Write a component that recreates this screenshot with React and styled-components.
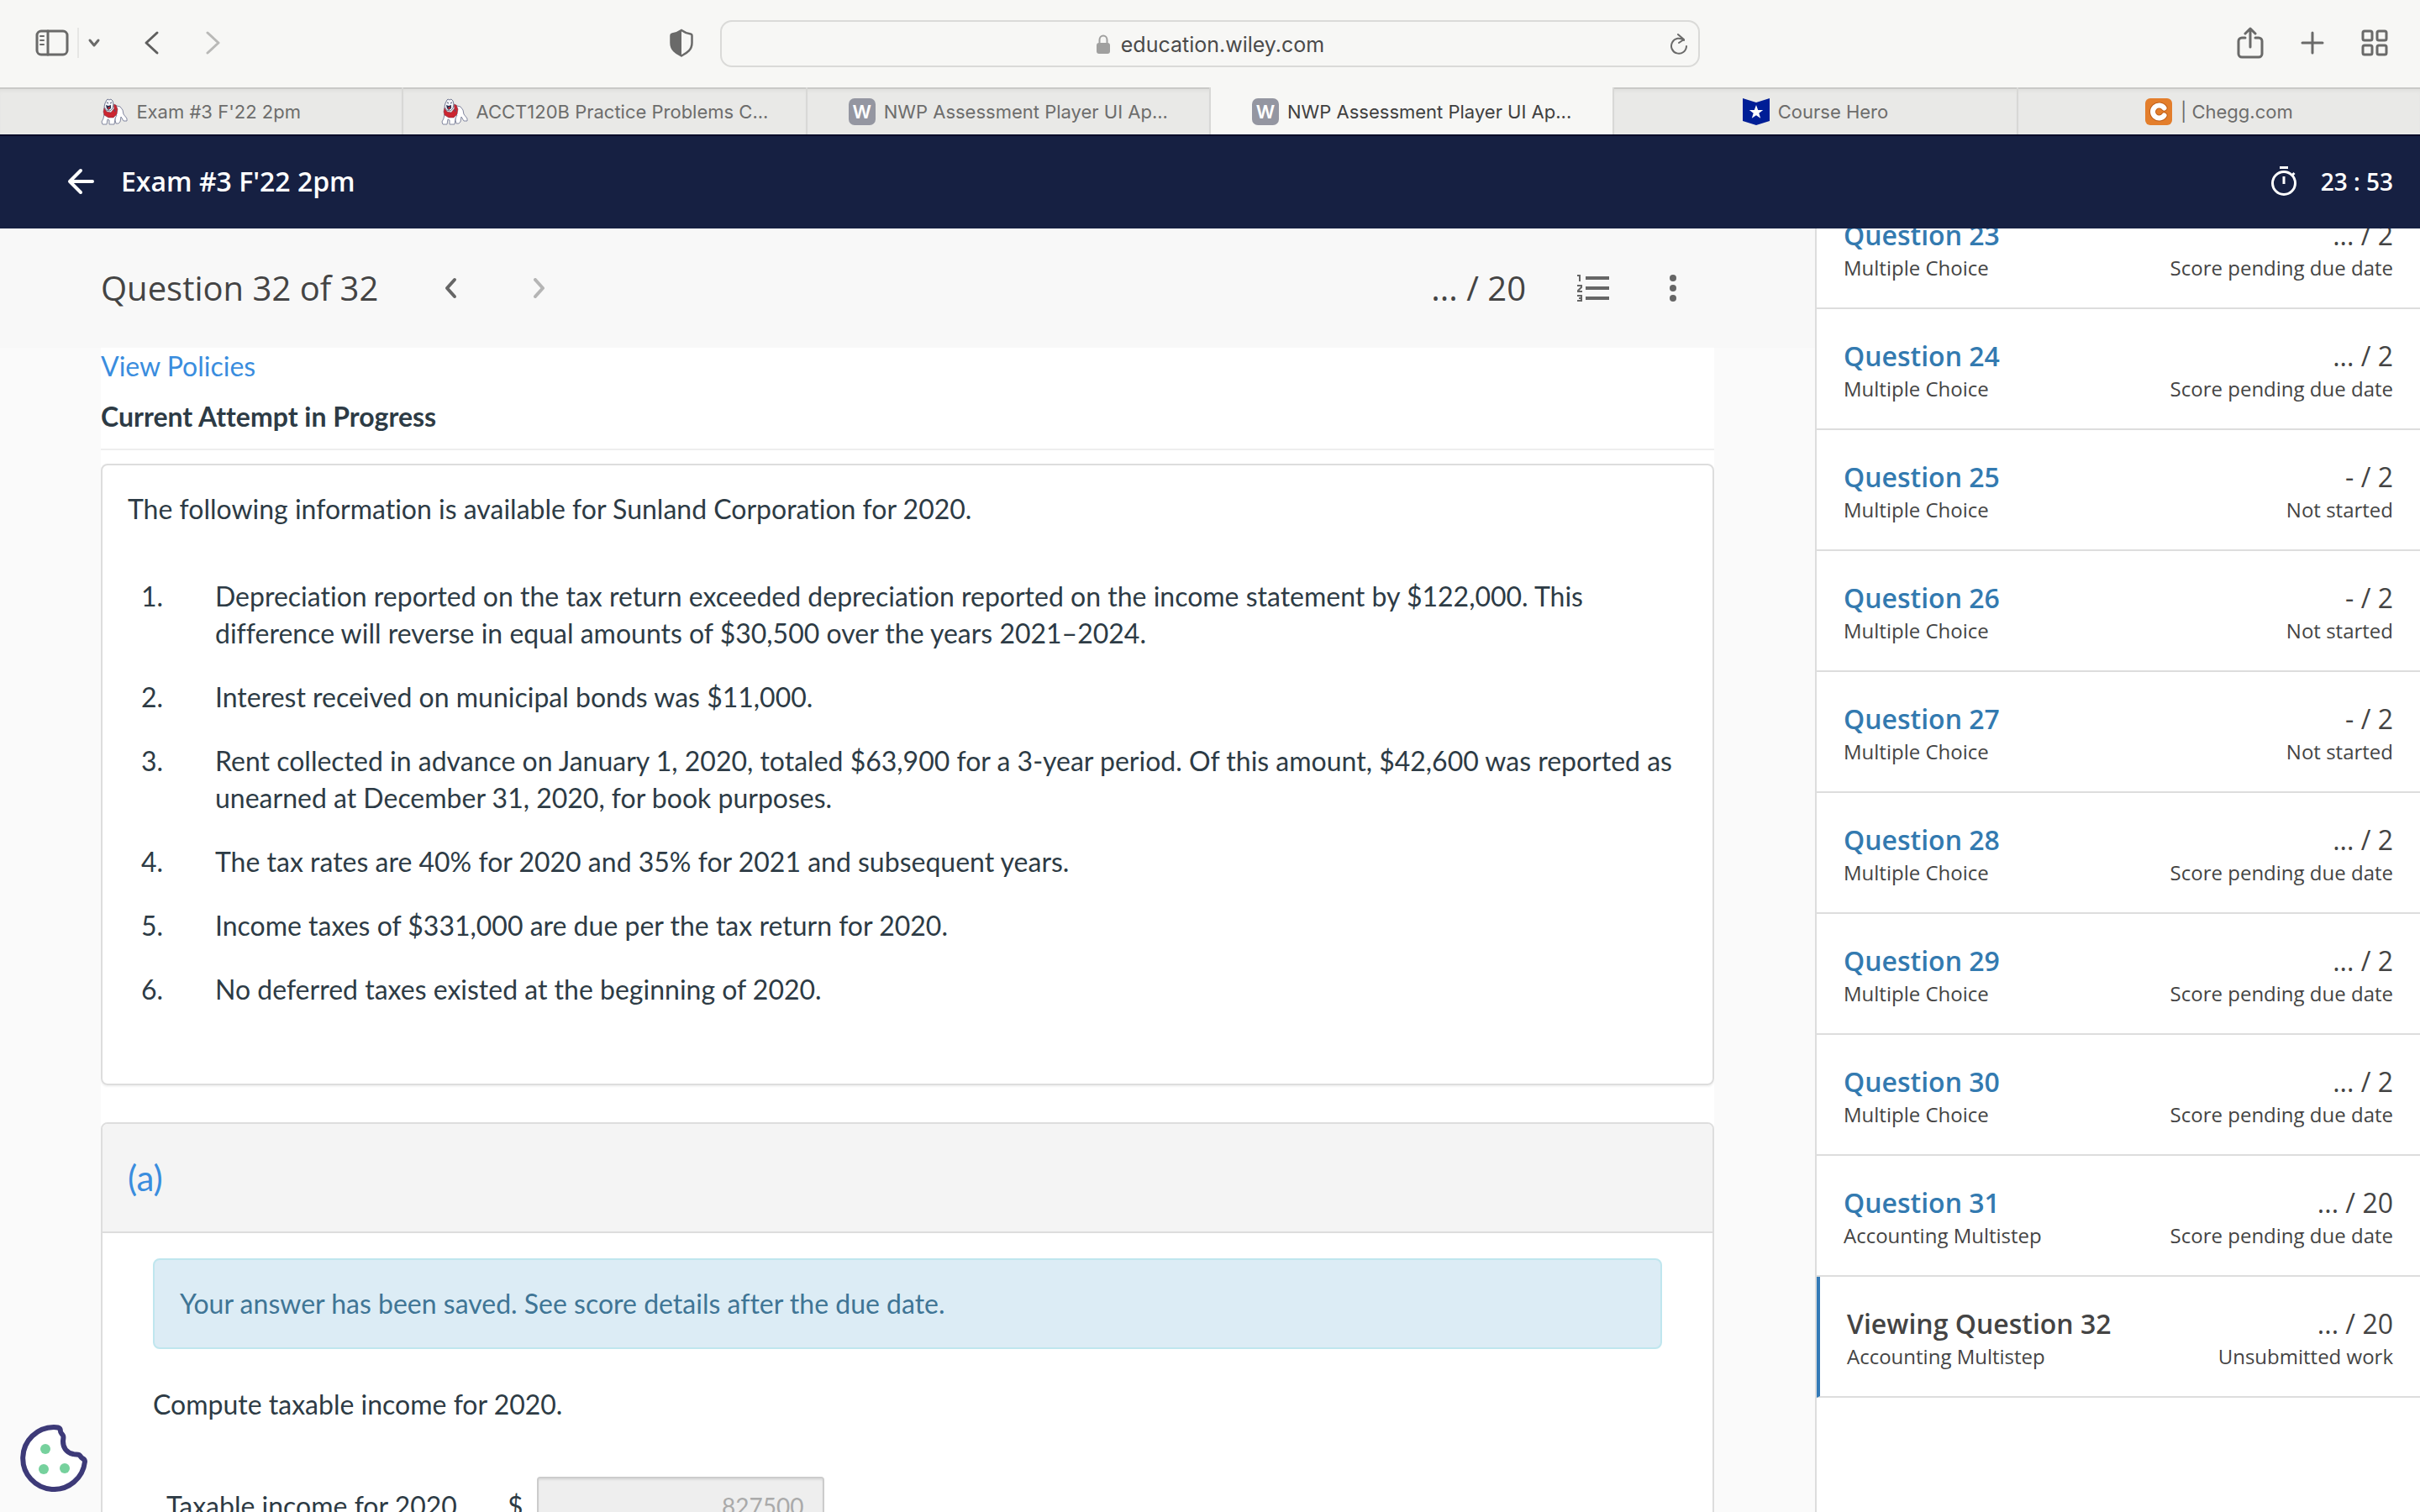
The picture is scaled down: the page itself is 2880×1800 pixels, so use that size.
import React from "react"
import styled, { createGlobalStyle } from "styled-components"

const GlobalStyle = createGlobalStyle`
  *, *::before, *::after {
    box-sizing: border-box;
  }
  body {
    margin: 0;
    background: #fafafa;
    color: #444;
    font-family: "Open Sans", "Noto Sans", sans-serif;
  }
  button {
    display: flex;
    align-items: center;
    justify-content: center;
    padding: 0;
    border: none;
    background: none;
    color: inherit;
    font: inherit;
    cursor: pointer;
  }
  a {
    text-decoration: none;
  }
  svg {
    display: block;
    flex: none;
  }
  h1, h2, h3, p, ul, ol {
    margin: 0;
    padding: 0;
  }
`

const Page = styled.div`
  display: flex;
  flex-direction: column;
  height: 100vh;
  overflow: hidden;
`

/* browser chrome */
const Toolbar = styled.div`
  display: grid;
  grid-template-columns: 1fr minmax(0, 1166px) 1fr;
  align-items: center;
  height: 104px;
  flex: none;
  background: #f7f7f5;
  color: #6a6a69;
`

const ToolbarLeft = styled.div`
  display: flex;
  align-items: center;
  padding: 0 32px 2px 42px;
`

const SidebarToggle = styled.div`
  display: flex;
  align-items: center;
  gap: 10px;
  margin-right: 50px;
`

const Divider = styled.span`
  width: 2px;
  height: 36px;
  background: #e6e6e4;
`

const NavButton = styled.button`
  width: 20px;
  margin-right: 54px;
  color: ${(p) => (p.$muted ? "#b9b9b7" : "#5f5f5e")};
`

const ShieldButton = styled.button`
  margin-left: auto;
`

const AddressBar = styled.div`
  display: flex;
  align-items: center;
  height: 56px;
  padding: 0 12px 0 34px;
  border: 2px solid #dadad8;
  border-radius: 14px;
`

const Address = styled.div`
  display: flex;
  flex: 1;
  align-items: center;
  justify-content: center;
  gap: 12px;
  padding-top: 2px;
  color: #4a4a4a;
  font-family: Inter, Roboto, sans-serif;
  font-size: 25px;
`

const ToolbarRight = styled.div`
  display: flex;
  align-items: center;
  justify-content: flex-end;
  gap: 44px;
  padding: 0 38px 2px 0;
`

const Tabs = styled.nav`
  display: flex;
  flex: none;
  height: 56px;
`

const Tab = styled.a`
  display: flex;
  flex: 1;
  align-items: center;
  justify-content: center;
  gap: 10px;
  min-width: 0;
  padding-top: 2px;
  border-left: 2px solid #d8d8d6;
  background: ${(p) => (p.$active ? "#f7f7f5" : "#e9e9e7")};
  box-shadow: ${(p) => (p.$active ? "none" : "inset 0 2px 0 #c9c9c7, inset 0 6px 4px -2px #dededc")};
  color: ${(p) => (p.$active ? "#404040" : "#6d6d6c")};
  font-family: Inter, Roboto, sans-serif;
  font-size: 22px;
  white-space: nowrap;

  &:first-child {
    border-left: none;
  }
`

const LetterIcon = styled.span`
  display: flex;
  align-items: center;
  justify-content: center;
  width: 32px;
  height: 32px;
  border-radius: 7px;
  background: #9496a1;
  color: #fff;
  font-weight: 600;
`

/* exam header */
const Header = styled.header`
  display: flex;
  flex: none;
  align-items: center;
  gap: 32px;
  height: 112px;
  padding: 0 32px 2px 80px;
  border-top: 2px solid #040b28;
  background: #162042;
  color: #fff;
`

const HeaderTitle = styled.h1`
  flex: 1;
  font-size: 32px;
  font-weight: 600;
  line-height: 44px;
`

const Timer = styled.div`
  display: flex;
  align-items: center;
  gap: 28px;
  font-size: 28px;
  font-weight: 600;
`

const Body = styled.div`
  display: grid;
  grid-template-columns: 3fr 1fr;
  flex: 1;
  min-height: 0;
`

const Main = styled.main`
  display: flex;
  flex-direction: column;
  min-width: 0;
  overflow: hidden;
`

const QuestionBar = styled.div`
  display: flex;
  flex: none;
  align-items: center;
  height: 142px;
  padding: 0 164px 0 120px;
  background: #f8f8f8;
  color: #666;
`

const BarText = styled.h2`
  color: #444;
  font-size: 40px;
  font-weight: 400;
  line-height: 56px;
`

const Pager = styled.div`
  display: flex;
  flex: 1;
  gap: 90px;
  padding-left: 78px;
`

const PagerButton = styled.button`
  width: 16px;
  opacity: ${(p) => (p.disabled ? 0.45 : 1)};
`

const BarActions = styled.div`
  display: flex;
  gap: 70px;
  padding-left: 60px;
`

const Content = styled.div`
  flex: 1;
  min-height: 0;
  margin: 0 120px;
  overflow: hidden;
  background: #fff;
  color: #2d3b45;
  font-family: Lato, "Open Sans", sans-serif;
  font-size: 32px;
  font-variant-ligatures: none;
  line-height: 44px;
  text-rendering: optimizeLegibility;
`

const PolicyLink = styled.a`
  display: block;
  color: #3a8dde;
`

const Attempt = styled.h3`
  margin-bottom: 16px;
  padding: 16px 0;
  border-bottom: 2px solid #eee;
  font-size: 32px;
  font-weight: 700;
  line-height: 44px;
`

const Card = styled.section`
  margin-bottom: 44px;
  border: 2px solid #ddd;
  border-radius: 8px;
  box-shadow: 0 2px 2px rgba(0, 0, 0, 0.05);
`

const Info = styled.div`
  padding: 30px 30px 90px;
`

const Facts = styled.ol`
  display: flex;
  flex-direction: column;
  gap: 32px;
  margin-top: 60px;
  padding: 0 16px;
  list-style: none;
`

const Fact = styled.li`
  display: grid;
  grid-template-columns: 88px 1fr;
`

const PartTitle = styled.h3`
  padding: 40px 30px;
  border-bottom: 2px solid #ddd;
  border-radius: 6px 6px 0 0;
  background: #f4f4f4;
  color: #3a8dde;
  font-size: 42px;
  font-weight: 400;
  line-height: 48px;
`

const PartBody = styled.div`
  padding: 30px 60px;
`

const Alert = styled.div`
  margin-bottom: 44px;
  padding: 30px;
  border: 2px solid #bfe6ee;
  border-radius: 8px;
  background: #dcecf5;
  color: #3f7595;
`

const AnswerRow = styled.div`
  display: flex;
  align-items: center;
  margin-top: 64px;
  padding-left: 16px;
`

const AnswerLabel = styled.label`
  width: 406px;
`

const Amount = styled.input`
  width: 342px;
  height: 70px;
  margin-left: 16px;
  padding: 0 22px;
  border: 2px solid #ccc;
  border-radius: 4px;
  background: #eee;
  box-shadow: inset 0 2px 2px rgba(0, 0, 0, 0.08);
  color: #aaa;
  font-family: Lato, sans-serif;
  font-size: 28px;
  text-align: right;
`

/* question list */
const Sidebar = styled.aside`
  min-height: 0;
  overflow: hidden;
  border-left: 2px solid #ddd;
  background: #fff;
`

const QuestionList = styled.ul`
  margin-top: -48px;
  list-style: none;
`

const QuestionItem = styled.li`
  display: grid;
  grid-template-columns: auto auto;
  align-content: center;
  justify-content: space-between;
  height: 144px;
  padding: 4px 32px 0;
  border-bottom: 2px solid #ddd;
  border-left: ${(p) => (p.$active ? "4px solid #337ab7" : "none")};
`

const QuestionLink = styled.a`
  color: ${(p) => (p.$active ? "#444" : "#337ab0")};
  font-size: 32px;
  font-weight: 600;
  line-height: 44px;
`

const Score = styled.span`
  font-size: 32px;
  line-height: 44px;
  text-align: right;
`

const Note = styled.span`
  font-size: 24px;
  line-height: 34px;
  text-align: ${(p) => (p.$end ? "right" : "left")};
`

const CookieButton = styled.button`
  position: fixed;
  bottom: 24px;
  left: 24px;
`

const Stroke = ({ w, h, width = 3, children }) => (
  <svg
    width={w}
    height={h}
    viewBox={`0 0 ${w} ${h}`}
    fill="none"
    stroke="currentColor"
    strokeWidth={width}
    strokeLinecap="round"
    strokeLinejoin="round"
  >
    {children}
  </svg>
)

const PanelIcon = () => (
  <Stroke w={40} h={32}>
    <rect x="2" y="2" width="36" height="28" rx="5" />
    <path d="M15 2v28" />
    <path d="M6 8h4M6 13h4M6 18h4" strokeWidth="2" />
  </Stroke>
)

const ShieldIcon = () => (
  <svg width="28" height="34" viewBox="0 0 28 34">
    <path
      d="M14 2C10 5 6 6 3 6.500c-1 .2-1.500.7-1.500 1.700V17c0 8 5.500 12 12.500 15.500C21 29 26.500 25 26.500 17V8.200c0-1-.5-1.500-1.500-1.700C22 6 18 5 14 2z"
      fill="none"
      stroke="#6a6a69"
      strokeWidth="2.500"
    />
    <path d="M14 2C10 5 6 6 3 6.500c-1 .2-1.500.7-1.500 1.700V17c0 8 5.500 12 12.500 15.500z" fill="#6a6a69" />
  </svg>
)

const LockIcon = () => (
  <svg width="18" height="24" viewBox="0 0 18 24">
    <rect x="1" y="10" width="16" height="13" rx="3" fill="#a0a09f" />
    <path d="M4.500 11V6.500a4.500 5 0 0 1 9 0V11" fill="none" stroke="#a0a09f" strokeWidth="2" />
  </svg>
)

const BulldogIcon = () => (
  <svg width="32" height="32" viewBox="0 0 32 32" strokeLinejoin="round">
    <path
      d="M19 9l4 1 3 4 1 5 4 5v3h-4l-3-5-1 6-2 2h-3l-1-4 1-17z"
      fill="#fff"
      stroke="#8388a0"
    />
    <path
      d="M4 19l-1 5-2 4 1 3h5l1-6 2 1v5h6l1-7 2-4z"
      fill="#fff"
      stroke="#8388a0"
    />
    <path d="M4 11l-1 5 1 4 5 3h6l4-4 1-6-2-5-3-1 1 5-4 5-5-1z" fill="#cb2530" stroke="#6d3046" strokeWidth="0.500" />
    <path
      d="M7 2l1-1 2 1 2-1 2 2 1 4-1 5-3 3-5-1-2-4 1-4z"
      fill="#f3f4f7"
      stroke="#767c95"
    />
    <path d="M6 8l3 1 3-1v4l-3 2-2-2z" fill="#27304f" />
    <path d="M8 11l3-1v2l-2 1z" fill="#cb2530" />
    <path d="M7 5l2 1M11 6l2-1M16 13l1 3" fill="none" stroke="#4b526f" />
  </svg>
)

const HeroIcon = () => (
  <svg width="32" height="32" viewBox="0 0 32 32">
    <path d="M0 0l16 5 16-5v27l-16 5-16-5z" fill="#001e96" />
    <path d="M16 8l2.200 6h6l-4.900 3.700 1.900 6.100L16 20.200l-5.200 3.600 1.900-6.100L7.800 14h6z" fill="#fff" />
  </svg>
)

const CheggIcon = () => (
  <svg width="32" height="32" viewBox="0 0 32 32">
    <rect width="32" height="32" rx="6" fill="#e37e2c" />
    <path d="M22.500 11.500a7.500 7.500 0 1 0 0 9" fill="none" stroke="#c05f19" strokeWidth="8" strokeLinecap="round" />
    <path d="M22.500 11.500a7.500 7.500 0 1 0 0 9" fill="none" stroke="#fff" strokeWidth="6" strokeLinecap="round" />
  </svg>
)

const TimerIcon = () => (
  <svg width="32" height="36" viewBox="0 0 32 36" fill="none" stroke="#fff" strokeWidth="3">
    <circle cx="16" cy="20" r="13.500" />
    <path d="M11 1.500h10M16 12v9M25.500 11l3-3" />
  </svg>
)

const NumberedListIcon = () => (
  <svg width="40" height="34" viewBox="0 0 40 34" fill="none" stroke="#666" strokeWidth="2">
    <path d="M11 5h28M11 17h28M11 29h28" strokeWidth="4" />
    <path d="M1 2h3v7M1 14h5v2l-4 4v1h5M1 26h5v6H1M3 29h3" />
  </svg>
)

const DotsIcon = () => (
  <svg width="10" height="34" viewBox="0 0 10 34" fill="#666">
    <circle cx="5" cy="5" r="4" />
    <circle cx="5" cy="17" r="4" />
    <circle cx="5" cy="29" r="4" />
  </svg>
)

const CookieIcon = () => (
  <svg width="80" height="80" viewBox="0 0 80 80">
    <path
      d="M45 3.500C43 3 41 3 40 3a37 37 0 1 0 37 41c0-2-1-3-3-4-2-1-2-3-4-4-2-1-4 0-7-1-9-2-12-9-12-15 0-3 1-5 0-7-1-2-3-3-3-5 0-2-1-4-3-4.500z"
      fill="#fff"
      stroke="#3d3a78"
      strokeWidth="6"
      strokeLinejoin="round"
    />
    <circle cx="30" cy="29" r="6" fill="#76d19d" />
    <circle cx="28" cy="53" r="6" fill="#76d19d" />
    <circle cx="53" cy="52" r="6" fill="#76d19d" />
  </svg>
)

const tabs = [
  { title: "Exam #3 F'22 2pm", icon: <BulldogIcon /> },
  { title: "ACCT120B Practice Problems C...", icon: <BulldogIcon /> },
  { title: "NWP Assessment Player UI Ap...", icon: <LetterIcon>W</LetterIcon> },
  { title: "NWP Assessment Player UI Ap...", icon: <LetterIcon>W</LetterIcon>, active: true },
  { title: "Course Hero", icon: <HeroIcon /> },
  { title: "| Chegg.com", icon: <CheggIcon /> },
]

const facts = [
  "Depreciation reported on the tax return exceeded depreciation reported on the income statement by $122,000. This difference will reverse in equal amounts of $30,500 over the years 2021–2024.",
  "Interest received on municipal bonds was $11,000.",
  "Rent collected in advance on January 1, 2020, totaled $63,900 for a 3-year period. Of this amount, $42,600 was reported as unearned at December 31, 2020, for book purposes.",
  "The tax rates are 40% for 2020 and 35% for 2021 and subsequent years.",
  "Income taxes of $331,000 are due per the tax return for 2020.",
  "No deferred taxes existed at the beginning of 2020.",
]

const questions = [
  { title: "Question 23", type: "Multiple Choice", score: "... / 2", status: "Score pending due date" },
  { title: "Question 24", type: "Multiple Choice", score: "... / 2", status: "Score pending due date" },
  { title: "Question 25", type: "Multiple Choice", score: "- / 2", status: "Not started" },
  { title: "Question 26", type: "Multiple Choice", score: "- / 2", status: "Not started" },
  { title: "Question 27", type: "Multiple Choice", score: "- / 2", status: "Not started" },
  { title: "Question 28", type: "Multiple Choice", score: "... / 2", status: "Score pending due date" },
  { title: "Question 29", type: "Multiple Choice", score: "... / 2", status: "Score pending due date" },
  { title: "Question 30", type: "Multiple Choice", score: "... / 2", status: "Score pending due date" },
  { title: "Question 31", type: "Accounting Multistep", score: "... / 20", status: "Score pending due date" },
  {
    title: "Viewing Question 32",
    type: "Accounting Multistep",
    score: "... / 20",
    status: "Unsubmitted work",
    active: true,
  },
]

const App = () => {
  return (
    <Page>
      <GlobalStyle />
      <Toolbar>
        <ToolbarLeft>
          <SidebarToggle>
            <button aria-label="Show sidebar">
              <PanelIcon />
            </button>
            <Divider />
            <button aria-label="Sidebar menu">
              <Stroke w={16} h={12}>
                <path d="M3 3l5 6 5-6" />
              </Stroke>
            </button>
          </SidebarToggle>
          <NavButton aria-label="Back">
            <Stroke w={20} h={30}>
              <path d="M17 3L4 15l13 12" />
            </Stroke>
          </NavButton>
          <NavButton aria-label="Forward" $muted>
            <Stroke w={20} h={30}>
              <path d="M3 3l13 12L3 27" />
            </Stroke>
          </NavButton>
          <ShieldButton aria-label="Privacy report">
            <ShieldIcon />
          </ShieldButton>
        </ToolbarLeft>
        <AddressBar>
          <Address>
            <LockIcon />
            education.wiley.com
          </Address>
          <button aria-label="Reload">
            <Stroke w={22} h={26} width={2}>
              <path d="M17 9a9 9 0 1 0 3 7M10 2l7 6-6 4" />
            </Stroke>
          </button>
        </AddressBar>
        <ToolbarRight>
          <button aria-label="Share">
            <Stroke w={32} h={38}>
              <path d="M10 13H6a4 4 0 0 0-4 4v15a4 4 0 0 0 4 4h20a4 4 0 0 0 4-4V17a4 4 0 0 0-4-4h-4M16 24V2M10 8l6-6 6 6" />
            </Stroke>
          </button>
          <button aria-label="New tab">
            <Stroke w={28} h={28}>
              <path d="M14 2v24M2 14h24" />
            </Stroke>
          </button>
          <button aria-label="Tab overview">
            <Stroke w={32} h={32}>
              <rect x="2" y="2" width="11" height="11" rx="2" />
              <rect x="19" y="2" width="11" height="11" rx="2" />
              <rect x="2" y="19" width="11" height="11" rx="2" />
              <rect x="19" y="19" width="11" height="11" rx="2" />
            </Stroke>
          </button>
        </ToolbarRight>
      </Toolbar>
      <Tabs>
        {tabs.map((tab, i) => (
          <Tab href="#" key={i} $active={tab.active}>
            {tab.icon}
            {tab.title}
          </Tab>
        ))}
      </Tabs>
      <Header>
        <button aria-label="Back to course">
          <Stroke w={32} h={32} width={4}>
            <path d="M30 16H3M16 3L3 16l13 13" />
          </Stroke>
        </button>
        <HeaderTitle>Exam #3 F'22 2pm</HeaderTitle>
        <Timer>
          <TimerIcon />
          23 : 53
        </Timer>
      </Header>
      <Body>
        <Main>
          <QuestionBar>
            <BarText>Question 32 of 32</BarText>
            <Pager>
              <PagerButton aria-label="Previous question">
                <Stroke w={16} h={26} width={4}>
                  <path d="M13 3L4 13l9 10" />
                </Stroke>
              </PagerButton>
              <PagerButton aria-label="Next question" disabled>
                <Stroke w={16} h={26} width={4}>
                  <path d="M3 3l9 10-9 10" />
                </Stroke>
              </PagerButton>
            </Pager>
            <BarText as="span">... / 20</BarText>
            <BarActions>
              <button aria-label="Question list">
                <NumberedListIcon />
              </button>
              <button aria-label="More options">
                <DotsIcon />
              </button>
            </BarActions>
          </QuestionBar>
          <Content>
            <PolicyLink href="#">View Policies</PolicyLink>
            <Attempt>Current Attempt in Progress</Attempt>
            <Card>
              <Info>
                <p>The following information is available for Sunland Corporation for 2020.</p>
                <Facts>
                  {facts.map((fact, i) => (
                    <Fact key={i}>
                      <span>{i + 1}.</span>
                      <span>{fact}</span>
                    </Fact>
                  ))}
                </Facts>
              </Info>
            </Card>
            <Card>
              <PartTitle>(a)</PartTitle>
              <PartBody>
                <Alert>Your answer has been saved. See score details after the due date.</Alert>
                <p>Compute taxable income for 2020.</p>
                <AnswerRow>
                  <AnswerLabel htmlFor="income">Taxable income for 2020</AnswerLabel>
                  <span>$</span>
                  <Amount id="income" defaultValue="827500" readOnly />
                </AnswerRow>
              </PartBody>
            </Card>
          </Content>
        </Main>
        <Sidebar>
          <QuestionList>
            {questions.map((q) => (
              <QuestionItem key={q.title} $active={q.active}>
                <QuestionLink href="#" $active={q.active}>
                  {q.title}
                </QuestionLink>
                <Score>{q.score}</Score>
                <Note>{q.type}</Note>
                <Note $end>{q.status}</Note>
              </QuestionItem>
            ))}
          </QuestionList>
        </Sidebar>
      </Body>
      <CookieButton aria-label="Cookie preferences">
        <CookieIcon />
      </CookieButton>
    </Page>
  )
}

export default App
